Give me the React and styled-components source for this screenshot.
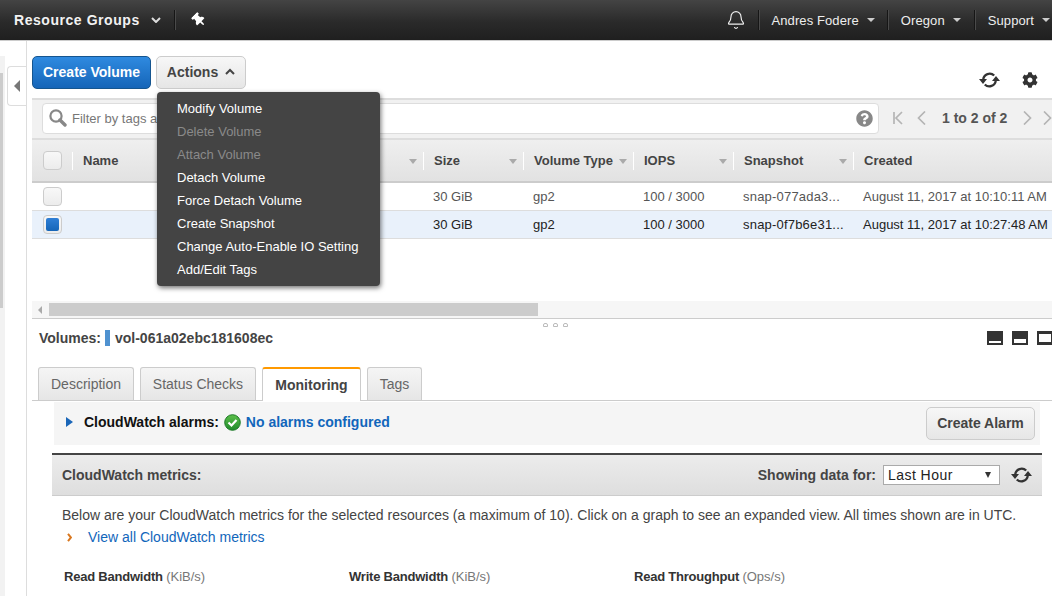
import React from "react";
import styled, { createGlobalStyle } from "styled-components";
import { FaCog, FaThumbtack, FaQuestionCircle } from "react-icons/fa";
import { Bell } from "lucide-react";

const Global = createGlobalStyle`
  html, body { margin: 0; padding: 0; width: 1052px; height: 596px; overflow: hidden; background: #fff; }
  body { font-family: "Liberation Sans", Arial, sans-serif; font-size: 14px; color: #444; }
  #root { width: 1052px; height: 596px; overflow: hidden; }
  * { box-sizing: border-box; }
`;

const Nav = styled.header`
  height: 41px;
  display: flex;
  align-items: center;
  background: linear-gradient(#444 0%, #2a2a2a 55%, #1f1f1f 100%);
  border-bottom: 1px solid #ccc;
  color: #eee;
  padding-left: 14px;
`;
const Brand = styled.span`
  font-size: 14px;
  font-weight: 700;
  width: 137px;
  letter-spacing: 0.55px;
  color: #f2f2f2;
  white-space: nowrap;
`;
const BrandChevron = styled.svg`
  margin-right: 13px;
`;
const NavSep = styled.span`
  width: 1px;
  height: 20px;
  background: #161616;
  box-shadow: 1px 0 0 #4a4a4a;
`;
const PinSlot = styled.span`
  display: flex;
  justify-content: center;
  width: 48px;
  color: #fff;
`;
const PinIcon = styled(FaThumbtack)`
  transform: rotate(-45deg);
`;
const NavRight = styled.div`
  margin-left: auto;
  display: flex;
  align-items: center;
  height: 100%;
`;
const BellSlot = styled.span`
  display: flex;
  margin-right: 12px;
  color: #eee;
`;
const NavItem = styled.span`
  display: flex;
  align-items: center;
  font-size: 13px;
  padding-left: 13px;
  padding-right: ${(p) => p.$pr}px;
  letter-spacing: 0.1px;
`;
const Caret = styled.span`
  width: 0;
  height: 0;
  margin-left: 8px;
  border-left: 4px solid transparent;
  border-right: 4px solid transparent;
  border-top: 4px solid #ccc;
`;

const Body = styled.div`
  display: flex;
  height: 555px;
`;
const Rail = styled.aside`
  width: 27px;
  padding-top: 15px;
  display: flex;
  border-right: 1px solid #ddd;
  flex: none;
`;
const RailTrack = styled.div`
  width: 5px;
  background: #f2f2f2;
  height: 100%;
  padding-top: 17px;
`;
const RailThumb = styled.div`
  width: 3px;
  height: 235px;
  background: #ccc;
`;
const RailTab = styled.div`
  margin: 10px 0 0 2px;
  width: 20px;
  height: 40px;
  background: #fff;
  border: 1px solid #ddd;
  border-right: none;
  border-radius: 4px 0 0 4px;
  display: flex;
  align-items: center;
  justify-content: center;
`;
const LeftTriangle = styled.span`
  width: 0;
  height: 0;
  border-top: 6px solid transparent;
  border-bottom: 6px solid transparent;
  border-right: 6px solid #777;
`;

const Main = styled.main`
  flex: 1;
  min-width: 0;
  display: flex;
  flex-direction: column;
`;
const Toolbar = styled.div`
  height: 57px;
  padding: 15px 0 0 5px;
  display: flex;
  gap: 5px;
`;
const PrimaryButton = styled.button`
  width: 119px;
  height: 33px;
  border: 1px solid #15558f;
  border-radius: 5px;
  background: linear-gradient(#2f8ae0, #1565b8);
  color: #fff;
  font: 700 14px "Liberation Sans", Arial, sans-serif;
  padding: 0 0 2px;
`;
const SecondaryButton = styled.button`
  display: flex;
  align-items: center;
  justify-content: center;
  width: ${(p) => p.$w}px;
  height: ${(p) => p.$h}px;
  border: 1px solid #ccc;
  border-radius: 5px;
  background: linear-gradient(#f7f7f7, #e6e6e6);
  color: #444;
  font: 700 14px "Liberation Sans", Arial, sans-serif;
  gap: 7px;
  padding: 0 0 2px;
`;
const ActionsWrap = styled.div`
  position: relative;
`;
const Menu = styled.ul`
  position: absolute;
  left: 1px;
  top: 36px;
  width: 223px;
  margin: 0;
  padding: 5px 0;
  list-style: none;
  background: #444;
  border-radius: 4px;
  box-shadow: 1px 2px 5px rgba(0, 0, 0, 0.55);
  z-index: 5;
`;
const MenuItem = styled.li`
  height: 23px;
  line-height: 23px;
  padding-left: 20px;
  font-size: 13px;
  color: ${(p) => (p.$off ? "#8a8a8a" : "#fff")};
`;
const ToolIcons = styled.div`
  margin-left: auto;
  display: flex;
  align-items: center;
  gap: 22px;
  padding: 6px 14px 0 0;
  color: #333;
`;

const FilterBar = styled.div`
  height: 42px;
  margin-left: 5px;
  padding: 3px 0 0 10px;
  display: flex;
  background: #f1f1f1;
  border-top: 2px solid #ddd;
  border-bottom: 2px solid #ddd;
`;
const FilterBox = styled.div`
  flex: none;
  width: 837px;
  height: 31px;
  background: #fff;
  border: 1px solid #ddd;
  border-radius: 4px;
  display: flex;
  align-items: center;
  padding: 0 5px 1px 6px;
  color: #777;
  font-size: 13px;
  gap: 5px;
  white-space: nowrap;
`;
const FilterText = styled.span`
  flex: 1;
`;
const Pager = styled.div`
  display: flex;
  align-items: center;
  height: 31px;
  padding-bottom: 1px;
  white-space: nowrap;
`;
const PagerSvg = styled.svg`
  margin-left: ${(p) => p.$ml}px;
  flex: none;
`;
const PagerLabel = styled.span`
  font-weight: 700;
  color: #555;
  font-size: 14px;
  margin-left: 14px;
`;

const gridCols = "40px 351px 100px 110px 100px 120px 199px";
const TableHead = styled.div`
  margin-left: 5px;
  height: 43px;
  display: grid;
  grid-template-columns: ${gridCols};
  align-items: center;
  background: linear-gradient(#efefef, #e2e2e2);
  border-bottom: 2px solid #ccc;
`;
const HeadCheck = styled.div`
  padding-left: 11px;
  display: flex;
`;
const HeadCell = styled.div`
  position: relative;
  height: 18px;
  line-height: 18px;
  padding-left: 10px;
  font-weight: 700;
  color: #444;
  border-left: 1px solid #fff;
  font-size: 13px;
`;
const SortCaret = styled.span`
  position: absolute;
  right: 6px;
  top: 7px;
  width: 0;
  height: 0;
  border-left: 4px solid transparent;
  border-right: 4px solid transparent;
  border-top: 5px solid #aaa;
`;
const Row = styled.div`
  margin-left: 5px;
  height: 28px;
  display: grid;
  grid-template-columns: ${gridCols};
  align-items: center;
  background: ${(p) => (p.$selected ? "#e9f1fb" : "#fff")};
  color: ${(p) => (p.$selected ? "#222" : "#555")};
  border-bottom: 1px solid #ddd;
  font-size: 13px;
`;
const RowCheck = styled.div`
  padding-left: 11px;
  display: flex;
`;
const Cell = styled.div`
  padding-left: 10px;
  white-space: nowrap;
  overflow: hidden;
`;
const SnapCell = styled(Cell)`
  letter-spacing: 0.2px;
`;
const Checkbox = styled.span`
  width: 19px;
  height: 19px;
  border: 1px solid #ccc;
  border-radius: 4px;
  background: linear-gradient(#f8f8f8, #ececec);
  display: flex;
  align-items: center;
  justify-content: center;
`;
const CheckFill = styled.span`
  width: 13px;
  height: 13px;
  border-radius: 2px;
  background: linear-gradient(#2f7fd6, #1565b8);
`;
const TableBlank = styled.div`
  height: 62px;
`;
const HScroll = styled.div`
  margin-left: 5px;
  height: 17px;
  display: flex;
  align-items: center;
  background: #f6f6f6;
  padding-left: 6px;
  gap: 7px;
`;
const HArrow = styled.span`
  width: 0;
  height: 0;
  border-top: 4px solid transparent;
  border-bottom: 4px solid transparent;
  border-right: 4px solid #aaa;
`;
const HThumb = styled.div`
  width: 489px;
  height: 13px;
  background: #ccc;
`;
const Divider = styled.div`
  margin-left: 5px;
  height: 1px;
  background: #ccc;
  position: relative;
`;
const Dots = styled.span`
  position: absolute;
  left: 511px;
  top: 5px;
  display: flex;
  gap: 5px;
`;
const Dot = styled.i`
  width: 5px;
  height: 4px;
  border: 1px solid #bbb;
  border-radius: 2px 2px 0 0;
`;
const DetailHead = styled.div`
  height: 48px;
  padding: 0 0 11px 12px;
  display: flex;
  align-items: center;
  font-weight: 700;
  color: #444;
  font-size: 14px;
`;
const VolColor = styled.span`
  width: 5px;
  height: 16px;
  background: #4f92d0;
  margin: 0 5px 0 4px;
`;
const PaneIcons = styled.div`
  margin-left: auto;
  display: flex;
  gap: 9px;
  margin-right: -1px;
`;
const TabBar = styled.div`
  margin-left: 5px;
  height: 34px;
  display: flex;
  align-items: flex-end;
  gap: 6px;
  padding-left: 6px;
  border-bottom: 1px solid #ccc;
`;
const Tab = styled.div`
  height: ${(p) => (p.$active ? 34 : 33)}px;
  width: ${(p) => p.$w}px;
  display: flex;
  align-items: center;
  justify-content: center;
  font-size: 14px;
  font-weight: ${(p) => (p.$active ? 700 : 400)};
  color: ${(p) => (p.$active ? "#444" : "#666")};
  background: ${(p) => (p.$active ? "#fff" : "linear-gradient(#f5f5f5, #e6e6e6)")};
  border: 1px solid #ccc;
  border-top: ${(p) => (p.$active ? "2px solid #f90" : "1px solid #ccc")};
  border-bottom: none;
  border-radius: 3px 3px 0 0;
  margin-bottom: ${(p) => (p.$active ? -1 : 0)}px;
`;
const AlarmPanel = styled.div`
  margin: 1px 12px 0 27px;
  height: 43px;
  background: #f5f5f5;
  display: flex;
  align-items: center;
  padding: 0 5px 3px 12px;
  font-weight: 700;
  color: #111;
`;
const Arrow = styled.span`
  width: 0;
  height: 0;
  border-top: 5px solid transparent;
  border-bottom: 5px solid transparent;
  border-left: 7px solid #1a66b8;
  margin-right: 11px;
`;
const AlarmLink = styled.span`
  color: #1166bb;
  margin-left: 5px;
`;
const CheckIcon = styled.svg`
  margin-left: 5px;
`;
const AlarmButton = styled(SecondaryButton)`
  margin: 2px 0 0 auto;
  padding: 0;
`;
const MetricsHead = styled.div`
  margin: 8px 10px 0 25px;
  height: 43px;
  display: flex;
  align-items: center;
  padding: 0 10px;
  background: linear-gradient(#ececec, #dedede);
  border-top: 2px solid #444;
  border-bottom: 1px solid #ccc;
  font-weight: 700;
  color: #444;
`;
const MetricsRight = styled.div`
  margin-left: auto;
  display: flex;
  align-items: center;
`;
const FakeSelect = styled.div`
  width: 117px;
  height: 20px;
  margin: 0 11px 0 7px;
  border: 1px solid #aaa;
  background: #fff;
  display: flex;
  align-items: center;
  justify-content: space-between;
  padding: 0 8px 0 4px;
  font-weight: 400;
  letter-spacing: 0.45px;
  color: #222;
`;
const SelArrow = styled.span`
  width: 0;
  height: 0;
  border-left: 3px solid transparent;
  border-right: 3px solid transparent;
  border-top: 6px solid #333;
`;
const Para = styled.p`
  margin: 11px 0 0 35px;
  line-height: 16px;
  color: #444;
  white-space: nowrap;
`;
const LinkLine = styled.div`
  margin: 6px 0 0 40px;
  line-height: 16px;
  display: flex;
  align-items: center;
  color: #1166bb;
  gap: 16px;
`;
const Graphs = styled.div`
  margin: 24px 0 0 37px;
  display: grid;
  grid-template-columns: 285px 285px 285px;
`;
const GraphTitle = styled.div`
  font-size: 13px;
  line-height: 16px;
  font-weight: 700;
  letter-spacing: -0.22px;
  color: #333;
`;
const Unit = styled.span`
  font-weight: 400;
  letter-spacing: 0;
  color: #777;
`;

const SyncIcon = () => (
  <svg width="21" height="16" viewBox="0 0 21 16" aria-hidden="true">
    <g fill="none" stroke="#333" strokeWidth="2.3">
      <path d="M4.2 7.5A6.5 6.5 0 0 1 15.2 3.5" />
      <path d="M5.8 12.5A6.5 6.5 0 0 0 16.8 8.5" />
    </g>
    <path d="M0 7h8l-4 5zM13 9h8l-4-5z" fill="#333" />
  </svg>
);

const SearchIcon = () => (
  <svg width="18" height="18" viewBox="0 0 18 18" aria-hidden="true">
    <circle cx="7" cy="7" r="5.6" fill="none" stroke="#888" strokeWidth="2.2" />
    <path d="M11 11l5 5" stroke="#888" strokeWidth="3.4" strokeLinecap="round" />
  </svg>
);

const PagerIcon = ({ d, ml }) => (
  <PagerSvg $ml={ml} width="12" height="14" viewBox="0 0 12 14" fill="none" stroke="#b5b5b5" strokeWidth="1.7">
    <path d={d} />
  </PagerSvg>
);

const PaneIcon = ({ y, h }) => (
  <svg width="16" height="14" viewBox="0 0 16 14" aria-hidden="true">
    <rect width="16" height="14" fill="#333" />
    <rect x="2" y={y} width="12" height={h} fill="#fff" />
  </svg>
);

const rows = [
  { snap: "snap-077ada3...", time: "August 11, 2017 at 10:10:11 AM" },
  { snap: "snap-0f7b6e31...", time: "August 11, 2017 at 10:27:48 AM", selected: true },
];
const heads = [
  ["Name", 1],
  ["Size", 1],
  ["Volume Type", 1],
  ["IOPS", 1],
  ["Snapshot", 1],
  ["Created", 0],
];
const menu = [
  ["Modify Volume"],
  ["Delete Volume", 1],
  ["Attach Volume", 1],
  ["Detach Volume"],
  ["Force Detach Volume"],
  ["Create Snapshot"],
  ["Change Auto-Enable IO Setting"],
  ["Add/Edit Tags"],
];

export default function App() {
  return (
    <>
      <Global />
      <Nav>
        <Brand>Resource Groups</Brand>
        <BrandChevron width="10" height="6" viewBox="0 0 10 6" fill="none" stroke="#ddd" strokeWidth="2">
          <path d="M1 1l4 4 4-4" />
        </BrandChevron>
        <NavSep />
        <PinSlot>
          <PinIcon size={14} />
        </PinSlot>
        <NavRight>
          <BellSlot>
            <Bell size={20} strokeWidth={1.4} />
          </BellSlot>
          <NavSep />
          <NavItem $pr={12}>
            Andres Fodere
            <Caret />
          </NavItem>
          <NavSep />
          <NavItem $pr={13}>
            Oregon
            <Caret />
          </NavItem>
          <NavSep />
          <NavItem $pr={2}>
            Support
            <Caret />
          </NavItem>
        </NavRight>
      </Nav>
      <Body>
        <Rail>
          <RailTrack>
            <RailThumb />
          </RailTrack>
          <RailTab>
            <LeftTriangle />
          </RailTab>
        </Rail>
        <Main>
          <Toolbar>
            <PrimaryButton>Create Volume</PrimaryButton>
            <ActionsWrap>
              <SecondaryButton $w={90} $h={33}>
                Actions
                <svg width="10" height="7" viewBox="0 0 10 7" fill="none" stroke="#444" strokeWidth="2">
                  <path d="M1 6l4-4 4 4" />
                </svg>
              </SecondaryButton>
              <Menu>
                {menu.map(([t, off]) => (
                  <MenuItem key={t} $off={off}>
                    {t}
                  </MenuItem>
                ))}
              </Menu>
            </ActionsWrap>
            <ToolIcons>
              <SyncIcon />
              <FaCog size={16} />
            </ToolIcons>
          </Toolbar>
          <FilterBar>
            <FilterBox>
              <SearchIcon />
              <FilterText>Filter by tags and attributes or search by keyword</FilterText>
              <FaQuestionCircle size={17} color="#888" />
            </FilterBox>
            <Pager>
              <PagerIcon ml={13} d="M2 1v12M10 1L4 7l6 6" />
              <PagerIcon ml={12} d="M9 .5L2.5 7 9 13.5" />
              <PagerLabel>1 to 2 of 2</PagerLabel>
              <PagerIcon ml={14} d="M3 .5L9.5 7 3 13.5" />
              <PagerIcon ml={8} d="M3 .5L9.5 7 3 13.5" />
            </Pager>
          </FilterBar>
          <TableHead>
            <HeadCheck>
              <Checkbox />
            </HeadCheck>
            {heads.map(([t, c]) => (
              <HeadCell key={t}>
                {t}
                {c ? <SortCaret /> : null}
              </HeadCell>
            ))}
          </TableHead>
          {rows.map((r) => (
            <Row key={r.snap} $selected={r.selected}>
              <RowCheck>
                <Checkbox>{r.selected ? <CheckFill /> : null}</Checkbox>
              </RowCheck>
              <Cell />
              <Cell>30 GiB</Cell>
              <Cell>gp2</Cell>
              <Cell>100 / 3000</Cell>
              <SnapCell>{r.snap}</SnapCell>
              <Cell>{r.time}</Cell>
            </Row>
          ))}
          <TableBlank />
          <HScroll>
            <HArrow />
            <HThumb />
          </HScroll>
          <Divider>
            <Dots>
              <Dot />
              <Dot />
              <Dot />
            </Dots>
          </Divider>
          <DetailHead>
            Volumes:
            <VolColor />
            vol-061a02ebc181608ec
            <PaneIcons>
              <PaneIcon y={10} h={2} />
              <PaneIcon y={8} h={4} />
              <PaneIcon y={3} h={8} />
            </PaneIcons>
          </DetailHead>
          <TabBar>
            <Tab $w={96}>Description</Tab>
            <Tab $w={116}>Status Checks</Tab>
            <Tab $w={99} $active>
              Monitoring
            </Tab>
            <Tab $w={55}>Tags</Tab>
          </TabBar>
          <AlarmPanel>
            <Arrow />
            CloudWatch alarms:
            <CheckIcon width="17" height="17" viewBox="0 0 17 17">
              <defs>
                <linearGradient id="okGreen" x1="0" y1="0" x2="0" y2="1">
                  <stop offset="0" stopColor="#5cc04a" />
                  <stop offset="1" stopColor="#1f8a2c" />
                </linearGradient>
              </defs>
              <circle cx="8.5" cy="8.5" r="7.8" fill="url(#okGreen)" stroke="#1d7a28" />
              <path d="M4.5 8.5l3 3 5-5.5" fill="none" stroke="#fff" strokeWidth="2.2" />
            </CheckIcon>
            <AlarmLink>No alarms configured</AlarmLink>
            <AlarmButton $w={109} $h={33}>
              Create Alarm
            </AlarmButton>
          </AlarmPanel>
          <MetricsHead>
            CloudWatch metrics:
            <MetricsRight>
              Showing data for:
              <FakeSelect>
                Last Hour
                <SelArrow />
              </FakeSelect>
              <SyncIcon />
            </MetricsRight>
          </MetricsHead>
          <Para>
            Below are your CloudWatch metrics for the selected resources (a maximum of 10). Click on a graph to see an
            expanded view. All times shown are in UTC.
          </Para>
          <LinkLine>
            <svg width="5" height="9" viewBox="0 0 5 9" fill="none" stroke="#d9771e" strokeWidth="2" aria-hidden="true">
              <path d="M1 .8L4 4.500 1 8.200" />
            </svg>
            View all CloudWatch metrics
          </LinkLine>
          <Graphs>
            <GraphTitle>
              Read Bandwidth <Unit>(KiB/s)</Unit>
            </GraphTitle>
            <GraphTitle>
              Write Bandwidth <Unit>(KiB/s)</Unit>
            </GraphTitle>
            <GraphTitle>
              Read Throughput <Unit>(Ops/s)</Unit>
            </GraphTitle>
          </Graphs>
        </Main>
      </Body>
    </>
  );
}
